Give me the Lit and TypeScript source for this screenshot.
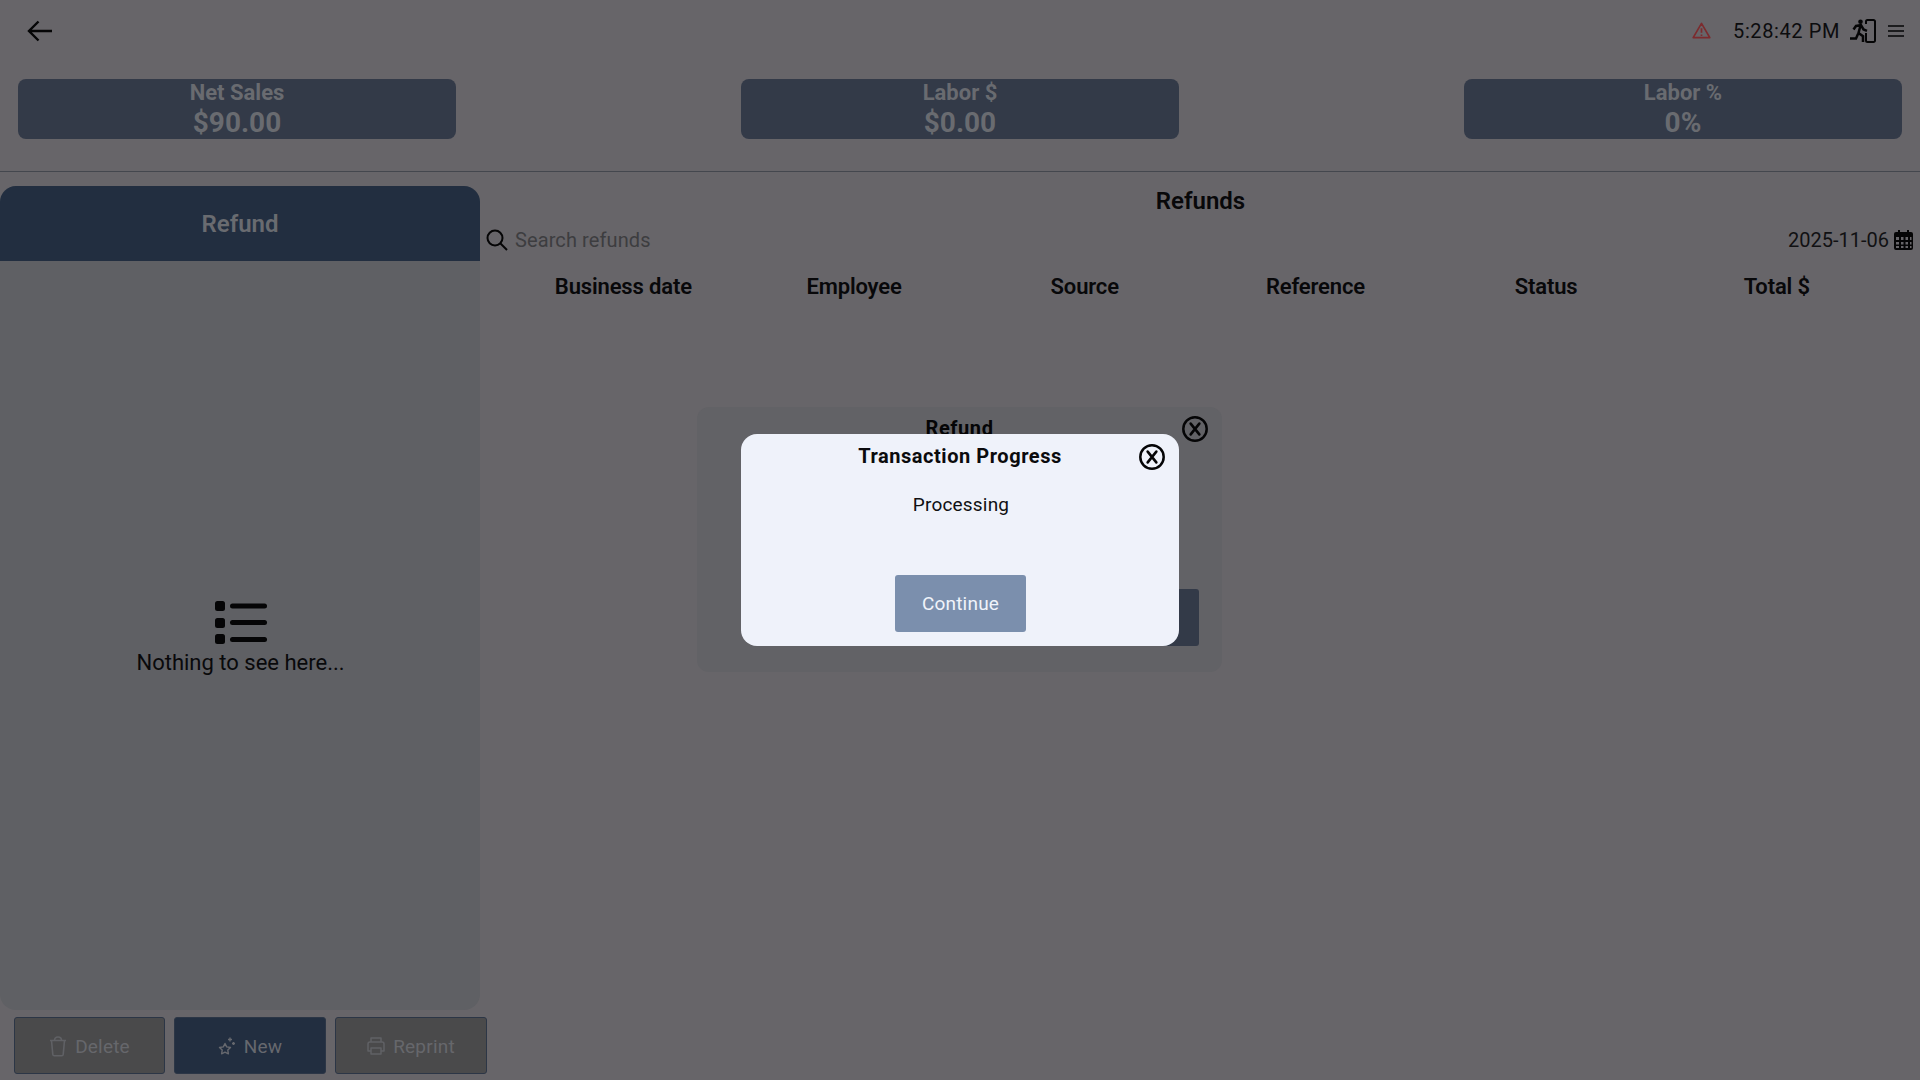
import { LitElement, html, css } from "lit";
import { customElement } from "lit/decorators.js";

const closeIcon = html`<svg viewBox="0 0 24 24" width="26" height="26" fill="none" stroke="currentColor"><circle cx="12" cy="12" r="10.800" stroke-width="2.300"/><path d="M8 7 16 17M16 7 8 17" stroke-width="2.400" stroke-linecap="round"/></svg>`;

@customElement("app-root")
export class AppRoot extends LitElement {
  static styles = css`
    :host { display: block; width: 1920px; height: 1080px; position: relative; overflow: hidden; background: #676569; font-family: Roboto, sans-serif; color: #050506; }
    .page { display: flex; flex-direction: column; height: 1080px; }
    .top { height: 61px; display: flex; align-items: center; padding: 0 16px 0 26px; box-sizing: border-box; flex: none; }
    .top .back { flex: none; }
    .spacer { flex: 1; }
    .alert { margin-right: 22px; }
    .time { font-size: 20px; letter-spacing: 0.6px; color: #0c0c0e; margin-right: 10px; }
    .exit { margin-right: 12px; }
    .stats { display: flex; justify-content: space-between; padding: 18px 18px 0; height: 61px; flex: none; }
    .stat { width: 438px; height: 60px; background: #333a48; border-radius: 8px; color: #696b70; text-align: center; font-weight: 700; display: flex; flex-direction: column; align-items: center; }
    .stat .l { font-size: 22px; line-height: 26px; margin-top: 1px; font-weight: 700; }
    .stat .v { font-size: 28px; line-height: 34px; }
    .rule { height: 1px; background: #44474e; margin-top: 31px; flex: none; }
    .main { flex: 1; display: flex; padding-top: 14px; min-height: 0; }
    .left { width: 480px; flex: none; display: flex; flex-direction: column; }
    .panel { height: 824px; background: #5f6064; border-radius: 16px; display: flex; flex-direction: column; overflow: hidden; flex: none; }
    .phead { height: 75px; flex: none; background: #222e40; color: #696b70; display: flex; align-items: center; justify-content: center; font-size: 24px; font-weight: 600; }
    .empty { flex: 1; display: flex; flex-direction: column; align-items: center; justify-content: center; font-size: 22px; line-height: 26px; color: #09090b; padding: 5px 0 0 1px; }
    .empty svg { display: block; margin: 0 0 5px 0; }
    .btns { display: flex; padding: 7px 0 0 14px; gap: 9px; width: 487px; box-sizing: border-box; }
    .btn { flex: none; height: 57px; box-sizing: border-box; border-radius: 3px; display: flex; align-items: center; justify-content: center; gap: 8px; padding-top: 1px; font-size: 19px; letter-spacing: 0.2px; color: #66676b; background: #4a4a4b; border: 1px solid #2c3646; }
    .b1 { width: 151px; }
    .b2 { width: 152px; background: #222e40; color: #66686e; }
    .b3 { width: 152px; }
    .right { flex: 1; min-width: 0; display: flex; flex-direction: column; }
    .title { text-align: center; font-size: 24px; font-weight: 600; line-height: 30px; color: #08080a; padding-left: 1px; }
    .filter { display: flex; align-items: center; height: 30px; margin-top: 9px; padding: 0 7px 0 6px; }
    .search { font-size: 20px; color: #3d3d40; margin-left: 7px; flex: 1; letter-spacing: 0.1px; }
    .date { font-size: 20px; color: #111113; margin-right: 5px; }
    .cols { display: grid; grid-template-columns: repeat(6, 230.7px); padding-left: 28px; margin-top: 17px; font-size: 22px; font-weight: 600; color: #08080a; text-align: center; line-height: 30px; letter-spacing: -0.15px; }
    .dlg1 { position: absolute; left: 697px; top: 407px; width: 525px; height: 265px; background: #626266; border-radius: 12px; }
    .dlg1 .t { text-align: center; font-size: 20px; font-weight: 700; letter-spacing: 0.6px; line-height: 24px; margin-top: 9px; color: #050506; }
    .dlg1 .x { position: absolute; left: 485px; top: 9px; color: #050506; }
    .dlg1 .b { position: absolute; right: 23px; top: 182px; width: 60px; height: 57px; background: #333a48; border-radius: 3px; }
    .dlg2 { position: absolute; left: 741px; top: 434px; width: 438px; height: 212px; background: #eff2fa; border-radius: 16px; display: flex; flex-direction: column; align-items: center; }
    .dlg2 .t { font-size: 20px; font-weight: 700; letter-spacing: 0.55px; line-height: 24px; margin-top: 10px; color: #0b0b0d; }
    .dlg2 .x { position: absolute; left: 398px; top: 10px; color: #050506; }
    .dlg2 .p { font-size: 19px; letter-spacing: 0.2px; line-height: 24px; margin-top: 25px; padding-left: 2px; color: #101012; }
    .dlg2 .c { margin-top: 58px; width: 131px; height: 57px; background: #7b8fad; color: #f0f3fa; border-radius: 3px; display: flex; align-items: center; justify-content: center; font-size: 19px; letter-spacing: 0.2px; padding-left: 1px; box-sizing: border-box; }
  `;

  render() {
    return html`
      <div class="page">
        <div class="top">
          <svg class="back" width="28" height="24" viewBox="0 0 28 24" fill="none" stroke="#050506" stroke-width="2.400"><path d="M26 12H3M12.500 2.500 3 12l9.500 9.500"/></svg>
          <div class="spacer"></div>
          <svg class="alert" width="19" height="17" viewBox="0 0 20 18" fill="none" stroke="#7c2b2e" stroke-width="1.800" stroke-linejoin="round"><path d="M10 1.500 1.200 16.500h17.600zM10 6.500v5M10 13.300v1.400"/></svg>
          <div class="time">5:28:42 PM</div>
          <svg class="exit" width="26" height="24" viewBox="0 0 26 24"><path d="M16 5V2.500A1.500 1.500 0 0 1 17.500 1h6A1.500 1.500 0 0 1 25 2.500v19a1.500 1.500 0 0 1-1.500 1.500h-6a1.500 1.500 0 0 1-1.500-1.500V14" fill="none" stroke="#050506" stroke-width="2"/><circle cx="10.500" cy="2.700" r="2.300" fill="#050506"/><path d="M3.500 10.500 6 7l5-.8 2.500 4.300 3.500 1.300M10.500 6.500 8.500 14l4.500 3.200V23M8 15 6 19.500H0" fill="none" stroke="#050506" stroke-width="2.500"/></svg>
          <svg width="16" height="12" viewBox="0 0 16 12" stroke="#050506" stroke-width="1.700"><path d="M0 1h16M0 6h16M0 11h16"/></svg>
        </div>
        <div class="stats">
          <div class="stat"><div class="l">Net Sales</div><div class="v">$90.00</div></div>
          <div class="stat"><div class="l">Labor $</div><div class="v">$0.00</div></div>
          <div class="stat"><div class="l">Labor %</div><div class="v">0%</div></div>
        </div>
        <div class="rule"></div>
        <div class="main">
          <div class="left">
            <div class="panel">
              <div class="phead">Refund</div>
              <div class="empty">
                <svg width="54" height="44" viewBox="0 0 54 44" fill="#050506"><rect x="1" y="0" width="10" height="10" rx="2.500"/><rect x="1" y="17" width="10" height="10" rx="2.500"/><rect x="1" y="33" width="10" height="10" rx="2.500"/><rect x="16" y="2.500" width="37" height="5" rx="2.500"/><rect x="16" y="19" width="37" height="5" rx="2.500"/><rect x="16" y="36" width="37" height="5" rx="2.500"/></svg>
                <div>Nothing to see here...</div>
              </div>
            </div>
            <div class="btns">
              <div class="btn b1"><svg width="18" height="21" viewBox="0 0 18 21" fill="none" stroke="#606165" stroke-width="1.600" stroke-linejoin="round"><path d="M1 4.500h16M5.500 4.500c0-2 1-3.500 3.500-3.500s3.500 1.500 3.500 3.500M2.500 4.500l1.300 14a1.500 1.500 0 0 0 1.500 1.300h7.400a1.500 1.500 0 0 0 1.500-1.300l1.300-14"/></svg>Delete</div>
              <div class="btn b2"><svg width="18" height="20" viewBox="0 0 18 20" fill="none" stroke="#66686e" stroke-width="1.400" stroke-linejoin="round"><path d="M7 7.500l1.700 3.400 3.800.6-2.700 2.600.6 3.700L7 16.100l-3.400 1.700.6-3.700L1.500 11.500l3.800-.6zM12 1.500v4M10 3.500h4M15.500 6v3M14 7.500h3"/></svg>New</div>
              <div class="btn b3"><svg width="18" height="20" viewBox="0 0 18 20" fill="none" stroke="#606165" stroke-width="1.500" stroke-linejoin="round"><path d="M4 6V2h10v4M4 15H1V8a2 2 0 0 1 2-2h12a2 2 0 0 1 2 2v7h-3M4 12h10v6H4z"/></svg>Reprint</div>
            </div>
          </div>
          <div class="right">
            <div class="title">Refunds</div>
            <div class="filter">
              <svg width="22" height="22" viewBox="0 0 22 22" fill="none" stroke="#050506" stroke-width="2"><circle cx="9" cy="9" r="7.500"/><path d="M14.500 14.500l6.500 6.500"/></svg>
              <div class="search">Search refunds</div>
              <div class="date">2025-11-06</div>
              <svg width="19" height="20" viewBox="0 0 19 20"><path fill-rule="evenodd" fill="#050506" d="M4 0h2v2h7V0h2v2h2a2 2 0 0 1 2 2v14a2 2 0 0 1-2 2H2a2 2 0 0 1-2-2V4a2 2 0 0 1 2-2h2zM2 7v3h3V7zm5 0v3h2.500V7zm4.500 0v3H14V7zM16 7v3h1.500V7zM2 12v2.500h3V12zm5 0v2.500h2.500V12zm4.500 0v2.500H14V12zM16 12v2.500h1.500V12zM2 16v2h3v-2zm5 0v2h2.500v-2zm4.500 0v2H14v-2zM16 16v2h1.500v-2z"/></svg>
            </div>
            <div class="cols">
              <div>Business date</div><div>Employee</div><div>Source</div><div>Reference</div><div>Status</div><div>Total $</div>
            </div>
          </div>
        </div>
      </div>
      <div class="dlg1">
        <div class="t">Refund</div>
        <div class="x">${closeIcon}</div>
        <div class="b"></div>
      </div>
      <div class="dlg2">
        <div class="t">Transaction Progress</div>
        <div class="x">${closeIcon}</div>
        <div class="p">Processing</div>
        <div class="c">Continue</div>
      </div>
    `;
  }
}
